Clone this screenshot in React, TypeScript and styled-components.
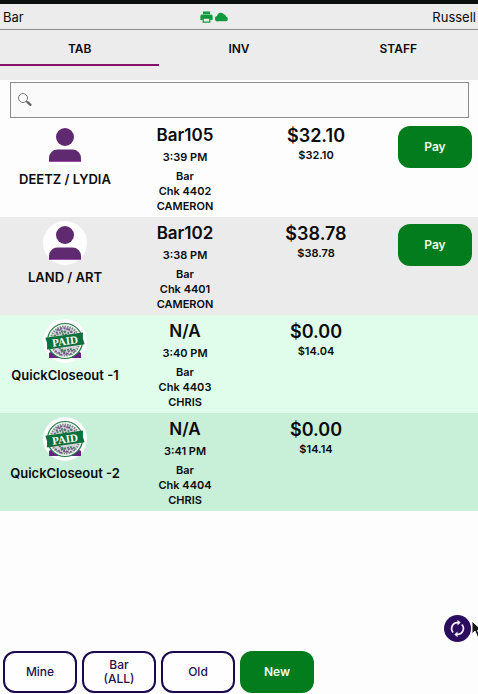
import React from "react";
import styled, { createGlobalStyle, css } from "styled-components";

const GlobalStyle = createGlobalStyle`
  * { box-sizing: border-box; }
  html, body { margin: 0; padding: 0; }
  body {
    background: #fdfdfd;
    color: #0b0b0d;
    font-family: Inter, "Liberation Sans", sans-serif;
  }
  button, input { font-family: inherit; color: inherit; }
`;

const Page = styled.div`
  display: flex;
  flex-direction: column;
  min-height: 100vh;
  border-top: 4px solid #0c0f0e;
`;

const StatusBar = styled.header`
  display: grid;
  grid-template-columns: 4fr auto 5fr;
  align-items: center;
  height: 26px;
  padding: 0 2px 0 3px;
  background: #ececec;
  border-bottom: 1px solid #8a8d8c;
  font-size: 13px;
  line-height: 20px;
`;

const StatusIcons = styled.div`
  display: flex;
  align-items: center;
  gap: 2px;
  color: #0d9a3c;
`;

const UserName = styled.span`
  text-align: right;
`;

const Tabs = styled.nav`
  display: grid;
  grid-template-columns: repeat(3, 1fr);
  height: 50px;
  align-items: start;
  background: #ececec;
`;

const Tab = styled.button<{ $active?: boolean }>`
  height: 36px;
  padding: 2px 0 0;
  border: 0;
  border-bottom: 2px solid ${(p) => (p.$active ? "#86106b" : "transparent")};
  background: none;
  font-size: 12px;
  font-weight: 600;
`;

const SearchBox = styled.label`
  display: flex;
  align-items: center;
  gap: 6px;
  height: 36px;
  margin: 2px 9px 1px 10px;
  padding: 0 6px;
  border: 1px solid #8b8b8b;
  background: #fafafa;
`;

const SearchInput = styled.input`
  flex: 1;
  min-width: 0;
  border: 0;
  outline: 0;
  background: none;
  font-size: 13px;
`;

const List = styled.ul`
  flex: 1;
  margin: 0;
  padding: 0;
  list-style: none;
`;

const Row = styled.li<{ $tone: string }>`
  display: grid;
  grid-template-columns: 130fr 110fr 152fr 86fr;
  height: 98px;
  background: ${(p) => p.$tone};
  text-align: center;
  font-weight: 600;
  font-size: 11px;
  line-height: 15px;
`;

const Guest = styled.div`
  display: flex;
  flex-direction: column;
  align-items: center;
  padding-top: 4px;
`;

const Avatar = styled.div`
  width: 44px;
  height: 44px;
  border-radius: 50%;
  background: #fdfdfd;

  svg { display: block; }
`;

const GuestName = styled.div`
  margin-top: 2px;
  font-size: 13px;
  line-height: 20px;
  white-space: nowrap;
`;

const Check = styled.div`
  padding-top: 6px;
`;

const TabNumber = styled.div`
  font-size: 17px;
  line-height: 20px;
`;

const Time = styled.div`
  margin: 5px 0 4px;
`;

const Money = styled.div`
  padding-top: 5px;
`;

const Balance = styled.div`
  font-size: 18px;
  line-height: 24px;
`;

const buttonShape = css`
  width: 74px;
  height: 42px;
  padding: 0;
  border-radius: 12px;
  font-size: 12px;
  line-height: 14px;
`;

const GreenButton = styled.button`
  ${buttonShape}
  border: 0;
  background: #037c1d;
  color: #f2fbf3;
  font-weight: 600;
`;

const FilterButton = styled.button`
  ${buttonShape}
  border: 2px solid #1b0750;
  background: #fefefe;
  color: #24124f;
  font-weight: 500;
`;

const Action = styled.div`
  padding-top: 7px;
`;

const Footer = styled.footer`
  display: flex;
  gap: 5px;
  padding: 0 3px 1px;
`;

const RefreshButton = styled.button`
  position: fixed;
  right: 7px;
  bottom: 52px;
  display: grid;
  place-items: center;
  width: 27px;
  height: 27px;
  padding: 0;
  border: 0;
  border-radius: 50%;
  background: #2c0c5e;
  color: #f4effa;
`;

const Pointer = styled.svg`
  position: fixed;
  right: -6px;
  bottom: 55px;
  pointer-events: none;
`;

const PrinterIcon = () => (
  <svg width="13" height="12" viewBox="0 0 13 12" aria-hidden="true">
    <path fill="currentColor" d="M3 0.5h7v2.500H3zM2 3.600h9a1.600 1.600 0 0 1 1.600 1.600V9H10.200V7H2.800v2H.4V5.200A1.600 1.600 0 0 1 2 3.600z" />
    <path fill="none" stroke="currentColor" strokeWidth="1.200" d="M3.200 7.200h6.600v3.900H3.200z" />
  </svg>
);

const CloudIcon = () => (
  <svg width="14" height="10" viewBox="0 0 14 10" aria-hidden="true">
    <path fill="currentColor" d="M3.200 9.300A2.700 2.700 0 0 1 2 4 3.900 3.900 0 0 1 9 2.300a3.500 3.500 0 0 1 2.300 2.500A2.400 2.400 0 0 1 11.300 9.300z" />
  </svg>
);

const SearchIcon = () => (
  <svg width="16" height="16" viewBox="0 0 16 16" aria-hidden="true">
    <circle cx="6" cy="6" r="4.500" fill="#fdfdfd" stroke="#777" strokeWidth="1" />
    <path d="M9 9l1.500 1.500" stroke="#777" strokeWidth="1" />
    <path d="M10.500 10.200l3 2.600" stroke="#666" strokeWidth="2.400" strokeLinecap="round" />
  </svg>
);

const PersonIcon = () => (
  <svg width="44" height="44" viewBox="0 0 44 44" aria-hidden="true">
    <g fill="#5f2a70">
      <circle cx="22" cy="14" r="9" />
      <path d="M6 38.500v-3.500a8.500 8.500 0 0 1 8.500-8.500h15a8.500 8.500 0 0 1 8.500 8.500v3.500z" />
    </g>
    <path d="M6 38h32" stroke="#7c128b" strokeWidth="1" />
  </svg>
);

const PaidIcon = () => (
  <svg width="44" height="44" viewBox="0 0 44 44" aria-hidden="true">
    <path d="M6 39v-5l7-4h18l7 4v5z" fill="#642580" />
    <circle cx="22" cy="22" r="17.500" fill="#edf4ee" stroke="#247c49" strokeWidth="1.200" />
    <circle cx="22" cy="22" r="14.500" fill="#d8d2dc" stroke="#7c8a86" strokeWidth="2" strokeDasharray="1.500 1" />
    <g fill="none" strokeWidth="1.800">
      <path d="M13 14l4-3 4 3 4-5 3 4 4 1M12 32l4 2 3-3 4 4 4-4 5 2M14 11l6-2 7 2M17 36l5-2 6 1" stroke="#74598a" strokeDasharray="2 1.500" />
      <path d="M11 17l6-3 5 2 7-4M16 29l5 3 6-2 5 1M18 12l6 1M18 33l5-2" stroke="#478360" strokeDasharray="2 1" />
    </g>
    <g transform="rotate(-8 22 22)">
      <path d="M3 16h38l-1 6 1 6H3l1-6z" fill="#0c713c" />
      <text x="22" y="26" textAnchor="middle" fill="#fafffb" fontFamily="Liberation Serif, serif" fontSize="11" fontWeight="700">PAID</text>
    </g>
  </svg>
);

const RefreshIcon = () => (
  <svg width="19" height="19" viewBox="0 0 24 24" fill="none" stroke="currentColor" strokeWidth="2.200" aria-hidden="true">
    <path d="M13 4.500h-1A7.500 7.500 0 0 0 6.500 17M11 19.500h1A7.500 7.500 0 0 0 17.500 7" />
    <path d="M12 .8l4 3.700-4 3.700zM12 15.800l-4 3.700 4 3.700z" fill="currentColor" stroke="none" />
  </svg>
);

interface BarTab {
  guest: string;
  number: string;
  time: string;
  check: string;
  server: string;
  balance: string;
  total: string;
  paid: boolean;
  tone: string;
}

const barTabs: BarTab[] = [
  { guest: "DEETZ / LYDIA", number: "Bar105", time: "3:39 PM", check: "4402", server: "CAMERON", balance: "$32.10", total: "$32.10", paid: false, tone: "#fdfdfd" },
  { guest: "LAND / ART", number: "Bar102", time: "3:38 PM", check: "4401", server: "CAMERON", balance: "$38.78", total: "$38.78", paid: false, tone: "#ebebeb" },
  { guest: "QuickCloseout -1", number: "N/A", time: "3:40 PM", check: "4403", server: "CHRIS", balance: "$0.00", total: "$14.04", paid: true, tone: "#dffdea" },
  { guest: "QuickCloseout -2", number: "N/A", time: "3:41 PM", check: "4404", server: "CHRIS", balance: "$0.00", total: "$14.14", paid: true, tone: "#c8efd8" },
];

const TabRow = ({ tab }: { tab: BarTab }) => (
  <Row $tone={tab.tone}>
    <Guest>
      <Avatar>{tab.paid ? <PaidIcon /> : <PersonIcon />}</Avatar>
      <GuestName>{tab.guest}</GuestName>
    </Guest>
    <Check>
      <TabNumber>{tab.number}</TabNumber>
      <Time>{tab.time}</Time>
      <div>Bar</div>
      <div>Chk {tab.check}</div>
      <div>{tab.server}</div>
    </Check>
    <Money>
      <Balance>{tab.balance}</Balance>
      <div>{tab.total}</div>
    </Money>
    <Action>{!tab.paid && <GreenButton type="button">Pay</GreenButton>}</Action>
  </Row>
);

export default function App() {
  return (
    <>
      <GlobalStyle />
      <Page>
        <StatusBar>
          <span>Bar</span>
          <StatusIcons>
            <PrinterIcon />
            <CloudIcon />
          </StatusIcons>
          <UserName>Russell</UserName>
        </StatusBar>
        <Tabs>
          <Tab type="button" $active>TAB</Tab>
          <Tab type="button">INV</Tab>
          <Tab type="button">STAFF</Tab>
        </Tabs>
        <SearchBox>
          <SearchIcon />
          <SearchInput type="search" aria-label="Search tabs" />
        </SearchBox>
        <List>
          {barTabs.map((tab) => (
            <TabRow key={tab.guest} tab={tab} />
          ))}
        </List>
        <Footer>
          <FilterButton type="button">Mine</FilterButton>
          <FilterButton type="button">Bar<br />(ALL)</FilterButton>
          <FilterButton type="button">Old</FilterButton>
          <GreenButton type="button">New</GreenButton>
        </Footer>
      </Page>
      <RefreshButton type="button" aria-label="Refresh">
        <RefreshIcon />
      </RefreshButton>
      <Pointer width="13" height="19" viewBox="0 0 13 19" aria-hidden="true">
        <path d="M1 1v13l3-3 2.500 6 2.500-1-2.500-5.500H11z" fill="#15151a" stroke="#f4f4f4" strokeWidth="1" />
      </Pointer>
    </>
  );
}
